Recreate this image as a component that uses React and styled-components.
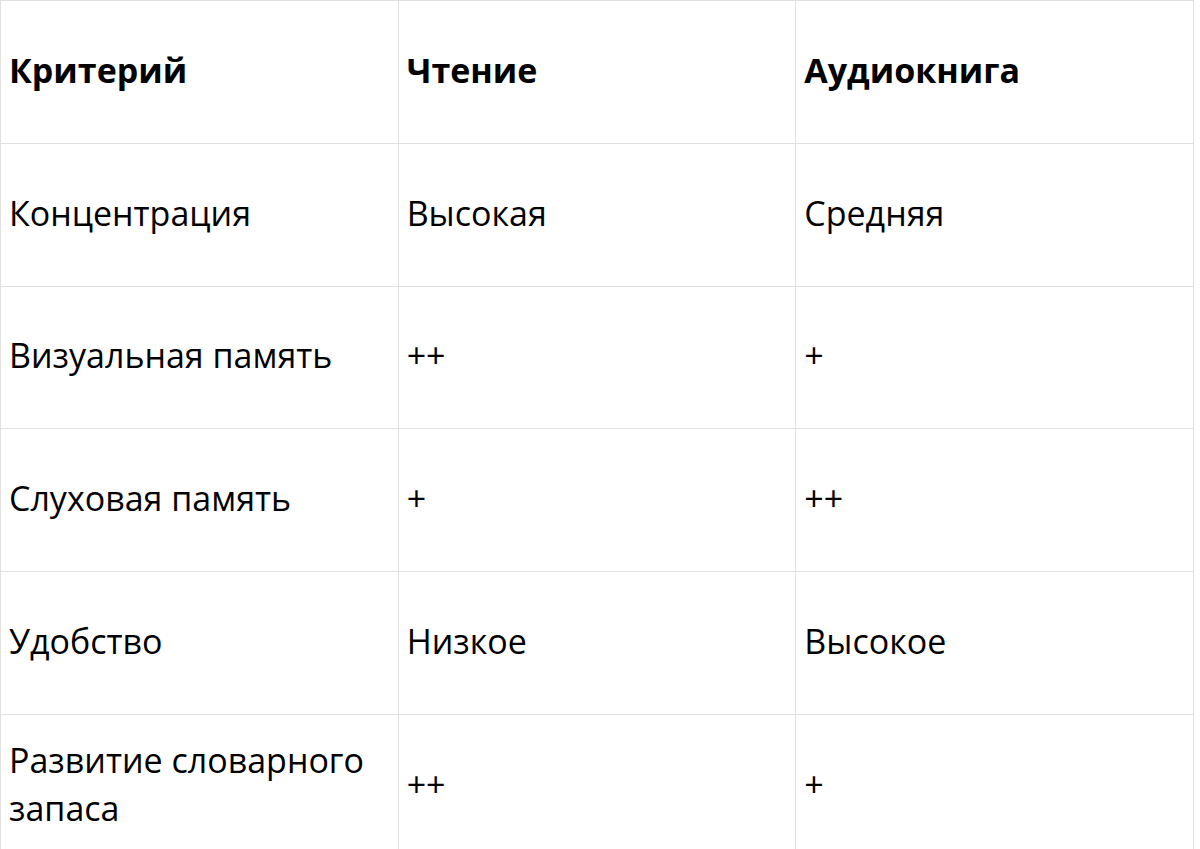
import React from "react";
import styled, { createGlobalStyle } from "styled-components";

const rows = [
  ["Концентрация", "Высокая", "Средняя"],
  ["Визуальная память", "++", "+"],
  ["Слуховая память", "+", "++"],
  ["Удобство", "Низкое", "Высокое"],
  ["Развитие словарного запаса", "++", "+"],
];

const App = () => {
  return (
    <>
      <GlobalStyle />
      <Table>
        <thead>
          <Row>
            <HeadCell>Критерий</HeadCell>
            <HeadCell>Чтение</HeadCell>
            <HeadCell>Аудиокнига</HeadCell>
          </Row>
        </thead>
        <tbody>
          {rows.map((r) => (
            <Row key={r[0]}>
              {r.map((c, i) => (
                <Cell key={i}>{c}</Cell>
              ))}
            </Row>
          ))}
        </tbody>
      </Table>
    </>
  );
};

export default App;

const GlobalStyle = createGlobalStyle`
  body {
    margin: 0;
    background: #fff;
    font-family: "Open Sans", "Noto Sans", sans-serif;
    color: #000;
    overflow: hidden;
  }
`;

const Table = styled.table`
  width: 1194px;
  border-collapse: collapse;
  table-layout: fixed;
  font-size: 34px;
  line-height: 48px;
`;

const Row = styled.tr`
  height: 142.75px;
`;

const HeadCell = styled.th`
  border: 1px solid #e0e0e0;
  padding: 0 8px 4px;
  text-align: left;
  vertical-align: middle;
  font-weight: 700;
`;

const Cell = styled.td`
  border: 1px solid #e0e0e0;
  padding: 21px 8px 25px;
  text-align: left;
  vertical-align: middle;
  font-weight: 400;
`;
